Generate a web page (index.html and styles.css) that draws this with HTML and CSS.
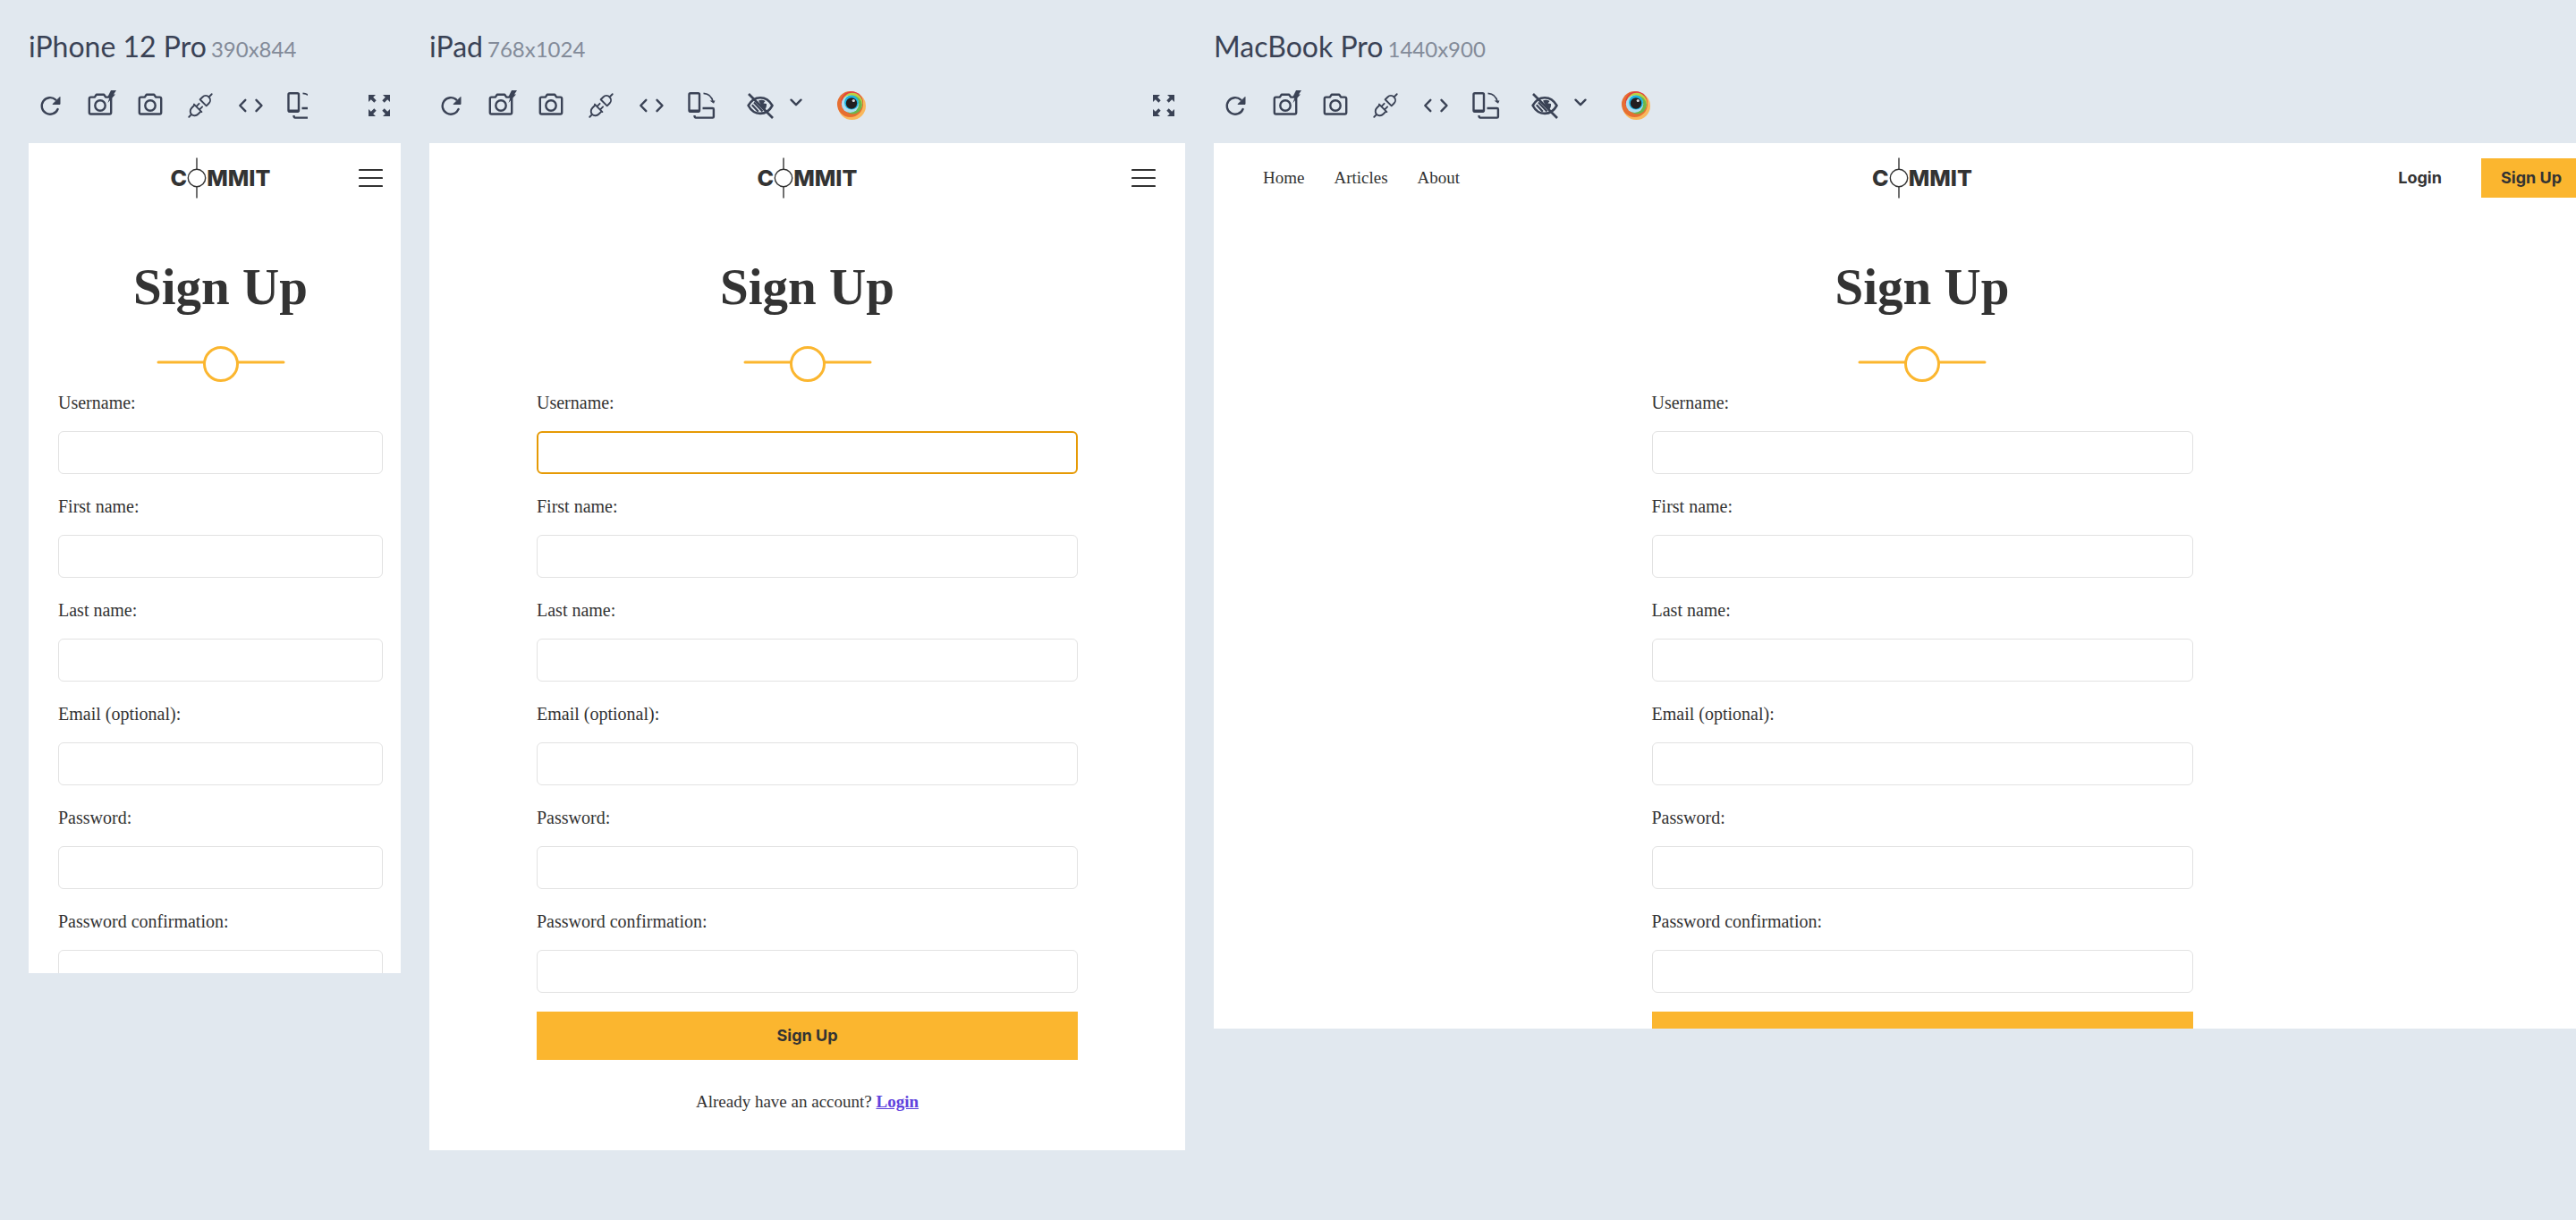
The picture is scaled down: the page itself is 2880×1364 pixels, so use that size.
FILE: index.html
```html
<!DOCTYPE html>
<html lang="en">
<head>
<meta charset="utf-8">
<title>Device previews</title>
<link rel="stylesheet" href="styles.css">
</head>
<body>
<svg class="sprite" aria-hidden="true">
  <symbol id="reload" viewBox="0 0 32 32"><path d="M24.6 20A9.3 9.3 0 1 1 22.3 9.6" fill="none" stroke="currentColor" stroke-width="2.4" stroke-linecap="round"/><path d="M27 6.5v8h-8z" fill="currentColor" stroke="currentColor" stroke-linejoin="round"/></symbol>
  <symbol id="camera" viewBox="0 0 32 32"><g fill="none" stroke="currentColor" stroke-width="2.4" stroke-linejoin="round"><path d="M5.5 6.6h4.3l2-2.8h8.4l2 2.800h4.300q1.700 0 1.700 1.700v15.500q0 1.700-1.700 1.700h-21q-1.700 0-1.700-1.700V8.300q0-1.700 1.700-1.700z"/><circle cx="16" cy="16" r="5.700"/></g></symbol>
  <symbol id="plug" viewBox="0 0 32 32"><g transform="translate(16 16) rotate(-45)" fill="none" stroke="currentColor" stroke-width="1.9" stroke-linecap="round" stroke-linejoin="round"><path d="M-18 0h4M-4-6V6M-4-5h-4.500a5.500 5 0 0 0 0 10H-4M-4-2.500h4.500M-4 2.500h4.500M4.500-5V5h4a5 5 0 0 0 0-10zM13.500 0H18"/></g></symbol>
  <symbol id="code" viewBox="0 0 32 32"><path d="M10.3 9.800L4.300 16l6 6.200M22.500 9.800L28.500 16l-6 6.200" fill="none" stroke="currentColor" stroke-width="2.400" stroke-linecap="round" stroke-linejoin="round"/></symbol>
  <symbol id="rotate" viewBox="0 0 32 32"><g fill="none" stroke="currentColor" stroke-width="2.4" stroke-linejoin="round"><rect x="2.5" y="2.3" width="11.5" height="20.4" rx="1.5"/><path d="M2.500 22h11.500" stroke-width="3"/><path d="M17.500 19h11.200q1.200 0 1.200 1.200v8.200q0 1.200-1.200 1.200H10q-1.500 0-1.500-2.600"/><path d="M18.500 2.300q9 .7 10.500 9.700" stroke-width="1.7"/></g><path d="M25.500 10.500h6l-1.500 3.200z" fill="currentColor"/></symbol>
  <symbol id="eye-off" viewBox="0 0 32 32"><path d="M2.600 16q4.900-8.800 13.400-8.800T29.500 16q-4.900 8.900-13.500 8.900T2.600 16z" fill="none" stroke="currentColor" stroke-width="2.6" stroke-linejoin="round"/><path d="M14 10.500q4-1.500 7.500.5l-2 2.500 3.500.5q.5 5-3 7.500z" fill="currentColor"/><path d="M9 12.500l9.500 10M6.800 15.200l7 7.500" stroke="currentColor" stroke-width="2.2"/><path d="M3 3l27 27" stroke="currentColor" stroke-width="2.6"/></symbol>
  <symbol id="chevron" viewBox="0 0 16 32"><path d="M2.500 9.700l5.500 5.500 5.500-5.500" fill="none" stroke="currentColor" stroke-width="2.4" stroke-linecap="round" stroke-linejoin="round"/></symbol>
  <symbol id="iris" viewBox="0 0 32 32"><circle cx="16.5" cy="16.5" r="15.5" fill="#f9b85c"/><circle cx="14.5" cy="14.5" r="14.500" fill="#e66f32"/><circle cx="16.500" cy="12.500" r="12.300" fill="#e43c41"/><circle cx="16.900" cy="13.300" r="11.500" fill="#bdd041"/><circle cx="17.500" cy="15.200" r="10.200" fill="#6cb64c"/><circle cx="14.500" cy="14.300" r="9.700" fill="#aeddf1"/><circle cx="16" cy="12.500" r="8" fill="#1db5e0"/><circle cx="16" cy="13.500" r="6.200" fill="#231f20"/><circle cx="18.300" cy="10.500" r="1.600" fill="#d8dde0"/></symbol>
  <symbol id="expand" viewBox="0 0 32 32"><g fill="currentColor"><path d="M4 4h8L9.200 6.800l3.500 3.500-2.400 2.400-3.500-3.500L4 12z"/><path d="M28 4v8l-2.800-2.800-3.500 3.500-2.400-2.400 3.500-3.500L20 4z"/><path d="M28 28h-8l2.800-2.800-3.500-3.500 2.400-2.400 3.500 3.500L28 20z"/><path d="M4 28v-8l2.800 2.800 3.500-3.500 2.400 2.400-3.500 3.500L12 28z"/></g></symbol>
  <symbol id="mark" viewBox="0 0 22 46"><g fill="none" stroke="#333" stroke-width="1.4"><circle cx="11" cy="23" r="9.7"/><path d="M11 .5v12.800M11 32.700v12.800"/></g></symbol>
  <symbol id="menu" viewBox="0 0 27 22"><path d="M1 2h25M1 11h25M1 20h25" stroke="#333" stroke-width="2.2" stroke-linecap="round"/></symbol>
  <symbol id="divider" viewBox="0 0 144 40"><g stroke="#fbb62f" stroke-width="3" stroke-linecap="round"><path d="M2 18h140"/><circle cx="72" cy="20" r="18.500" fill="#fff"/></g></symbol>
</svg>

<main class="board">
  <section class="device phone">
    <h2 class="device-name">iPhone 12 Pro <small>390x844</small></h2>
    <div class="toolbar">
      <div class="tools">
        <button aria-label="Reload"><svg><use href="#reload"/></svg></button>
        <button aria-label="Full page screenshot"><svg><use href="#camera"/><path class="bolt" d="M28-1h6l-3 4.500h2L24.500 13l2-6H24z"/></svg></button>
        <button aria-label="Screenshot"><svg><use href="#camera"/></svg></button>
        <button aria-label="Connection"><svg><use href="#plug"/></svg></button>
        <button aria-label="Inspect"><svg><use href="#code"/></svg></button>
        <button aria-label="Rotate"><svg><use href="#rotate"/></svg></button>
      </div>
      <button aria-label="Expand"><svg><use href="#expand"/></svg></button>
    </div>
    <div class="frame"><div class="page">
      <header class="nav">
        <a class="logo" href="#"><span>C</span><svg><use href="#mark"/></svg><span>MMIT</span></a>
        <button class="menu" aria-label="Menu"><svg><use href="#menu"/></svg></button>
      </header>
      <h1>Sign Up</h1>
      <svg class="divider" aria-hidden="true"><use href="#divider"/></svg>
      <form class="form">
        <label for="p1">Username:</label><input id="p1" type="text">
        <label for="p2">First name:</label><input id="p2" type="text">
        <label for="p3">Last name:</label><input id="p3" type="text">
        <label for="p4">Email (optional):</label><input id="p4" type="email">
        <label for="p5">Password:</label><input id="p5" type="password">
        <label for="p6">Password confirmation:</label><input id="p6" type="password">
      </form>
    </div></div>
  </section>

  <section class="device tablet">
    <h2 class="device-name">iPad <small>768x1024</small></h2>
    <div class="toolbar">
      <div class="tools">
        <button aria-label="Reload"><svg><use href="#reload"/></svg></button>
        <button aria-label="Full page screenshot"><svg><use href="#camera"/><path class="bolt" d="M28-1h6l-3 4.500h2L24.500 13l2-6H24z"/></svg></button>
        <button aria-label="Screenshot"><svg><use href="#camera"/></svg></button>
        <button aria-label="Connection"><svg><use href="#plug"/></svg></button>
        <button aria-label="Inspect"><svg><use href="#code"/></svg></button>
        <button aria-label="Rotate"><svg><use href="#rotate"/></svg></button>
        <span class="vision">
          <button aria-label="Simulate vision"><svg><use href="#eye-off"/></svg></button>
          <button class="narrow" aria-label="Vision options"><svg><use href="#chevron"/></svg></button>
        </span>
        <button class="iris" aria-label="Open in another browser"><svg><use href="#iris"/></svg></button>
      </div>
      <button aria-label="Expand"><svg><use href="#expand"/></svg></button>
    </div>
    <div class="frame"><div class="page">
      <header class="nav">
        <a class="logo" href="#"><span>C</span><svg><use href="#mark"/></svg><span>MMIT</span></a>
        <button class="menu" aria-label="Menu"><svg><use href="#menu"/></svg></button>
      </header>
      <h1>Sign Up</h1>
      <svg class="divider" aria-hidden="true"><use href="#divider"/></svg>
      <form class="form">
        <label for="t1">Username:</label><input id="t1" class="active" type="text">
        <label for="t2">First name:</label><input id="t2" type="text">
        <label for="t3">Last name:</label><input id="t3" type="text">
        <label for="t4">Email (optional):</label><input id="t4" type="email">
        <label for="t5">Password:</label><input id="t5" type="password">
        <label for="t6">Password confirmation:</label><input id="t6" type="password">
        <button class="submit">Sign Up</button>
      </form>
      <p class="account">Already have an account? <a href="#">Login</a></p>
    </div></div>
  </section>

  <section class="device laptop">
    <h2 class="device-name">MacBook Pro <small>1440x900</small></h2>
    <div class="toolbar">
      <div class="tools">
        <button aria-label="Reload"><svg><use href="#reload"/></svg></button>
        <button aria-label="Full page screenshot"><svg><use href="#camera"/><path class="bolt" d="M28-1h6l-3 4.500h2L24.500 13l2-6H24z"/></svg></button>
        <button aria-label="Screenshot"><svg><use href="#camera"/></svg></button>
        <button aria-label="Connection"><svg><use href="#plug"/></svg></button>
        <button aria-label="Inspect"><svg><use href="#code"/></svg></button>
        <button aria-label="Rotate"><svg><use href="#rotate"/></svg></button>
        <span class="vision">
          <button aria-label="Simulate vision"><svg><use href="#eye-off"/></svg></button>
          <button class="narrow" aria-label="Vision options"><svg><use href="#chevron"/></svg></button>
        </span>
        <button class="iris" aria-label="Open in another browser"><svg><use href="#iris"/></svg></button>
      </div>
    </div>
    <div class="frame"><div class="page">
      <header class="nav wide">
        <nav class="links"><a href="#">Home</a><a href="#">Articles</a><a href="#">About</a></nav>
        <a class="logo" href="#"><span>C</span><svg><use href="#mark"/></svg><span>MMIT</span></a>
        <div class="auth"><a href="#">Login</a><a class="join" href="#">Sign Up</a></div>
      </header>
      <h1>Sign Up</h1>
      <svg class="divider" aria-hidden="true"><use href="#divider"/></svg>
      <form class="form">
        <label for="m1">Username:</label><input id="m1" type="text">
        <label for="m2">First name:</label><input id="m2" type="text">
        <label for="m3">Last name:</label><input id="m3" type="text">
        <label for="m4">Email (optional):</label><input id="m4" type="email">
        <label for="m5">Password:</label><input id="m5" type="password">
        <label for="m6">Password confirmation:</label><input id="m6" type="password">
        <button class="submit" aria-label="Sign Up"></button>
      </form>
    </div></div>
  </section>
</main>
</body>
</html>
```
FILE: styles.css
```css
* { box-sizing: border-box; }

body {
  margin: 0;
  overflow: hidden;
  background: #e1e8ef;
  color: #333;
  font-family: "Liberation Serif", serif;
  font-size: 20px;
  line-height: 24px;
}

a { color: inherit; text-decoration: none; }
button { border: 0; padding: 0; background: none; color: inherit; }
svg { display: block; overflow: visible; }
.sprite { position: absolute; width: 0; height: 0; }

/* Board of devices */
.board {
  display: flex;
  align-items: flex-start;
  gap: 32px;
  min-height: 100vh;
  padding: 32px;
}
.device { flex: none; color: #3a4255; }
.phone { width: 416px; --page: 429px; --view: 928px; }
.tablet { width: 845px; --page: 845px; --view: 1126px; }
.laptop { width: 1584px; --page: 1584px; --view: 990px; }

.device-name {
  display: flex;
  align-items: baseline;
  gap: 5px;
  height: 40px;
  margin: 0;
  font: 400 32px/40px Lato, sans-serif;
  white-space: nowrap;
}
.device-name small { font-size: 24px; color: #838b99; }

/* Toolbar */
.toolbar {
  display: flex;
  justify-content: space-between;
  margin: 30px 0 26px;
  padding: 0 8px;
}
.tools { display: flex; flex: 1; gap: 24px; margin-right: 64px; min-width: 0; overflow-x: clip; }
.toolbar button { flex: none; width: 32px; height: 32px; }
.toolbar svg { width: 100%; height: 32px; }
.bolt { fill: currentColor; }
.vision { display: flex; gap: 16px; margin: 0 14px 0 10px; }
.toolbar .narrow { width: 16px; }

/* Page inside the frame */
.frame { height: var(--view); overflow: hidden; background: #fff; color: #333; }
.page { width: var(--page); }

.nav {
  display: grid;
  grid-template-columns: 1fr auto 1fr;
  align-items: center;
  height: 77px;
  padding: 0 33px;
}
.nav.wide { padding: 0 55px; }
.logo {
  grid-column: 2;
  display: flex;
  align-items: center;
  font: 800 25px/32px Inter, sans-serif;
}
.logo svg { width: 22px; height: 46px; }
.menu { grid-column: 3; justify-self: end; }
.menu svg { width: 27px; height: 22px; }
.links { display: flex; gap: 33px; font-size: 19px; }
.auth { display: flex; align-items: center; justify-self: end; gap: 44px; font: 700 18px/24px Inter, sans-serif; }
.join { padding: 10px 22px; background: #fbb62f; }

h1 { margin: 52px 0 34px; font-size: 57px; line-height: 64px; text-align: center; }
.divider { width: 144px; height: 40px; margin: 0 auto; }

.form {
  display: flex;
  flex-direction: column;
  max-width: 671px;
  margin: 0 auto;
  padding: 11px 33px 0;
}
.form label { margin-bottom: 20px; }
.form input {
  height: 48px;
  margin-bottom: 24px;
  padding: 0 12px;
  border: 1px solid #e2e2e2;
  border-radius: 6px;
  background: #fff;
  font: inherit;
}
.form .active { border: 2px solid #e69a05; }
.form .submit {
  height: 54px;
  margin-top: -3px;
  background: #fbb62f;
  font: 700 18px/24px Inter, sans-serif;
}
.account { margin: 35px 0 0; font-size: 19px; text-align: center; }
.account a { color: #5f43dd; font-weight: 700; text-decoration: underline; }
```
